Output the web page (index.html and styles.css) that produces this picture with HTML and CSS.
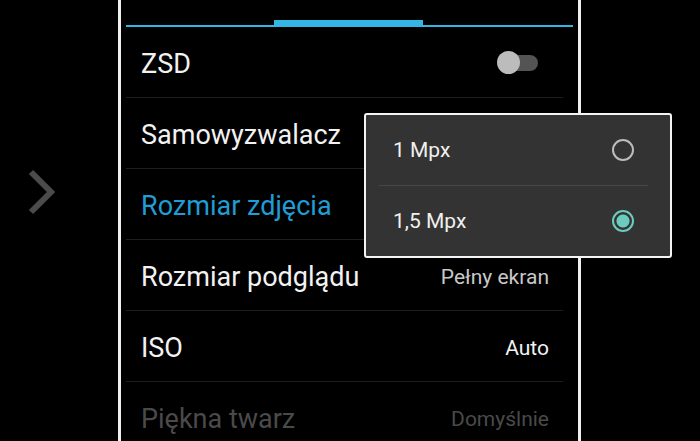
FILE: index.html
```html
<!DOCTYPE html>
<html lang="pl">
<head>
    <meta charset="UTF-8">
    <meta name="viewport" content="width=device-width, initial-scale=1.0">
    <title>Ustawienia aparatu</title>
    <link rel="stylesheet" href="styles.css">
</head>
<body>
    <div class="ekran">
        <div class="lewa">
            <svg class="strzalka" width="40" height="60" viewBox="0 0 40 60">
                <polyline points="9,8 29,28 9,48" fill="none" stroke="#4b4b4b" stroke-width="6"/>
            </svg>
        </div>
        <div class="panel">
            <div class="zakladki">
                <div class="wskaznik"></div>
            </div>
            <div class="lista">
                <div class="wiersz">
                    <span class="nazwa">ZSD</span>
                    <span class="przelacznik"><span class="tor"></span><span class="galka"></span></span>
                </div>
                <div class="wiersz">
                    <span class="nazwa">Samowyzwalacz</span>
                </div>
                <div class="wiersz">
                    <span class="nazwa aktywna">Rozmiar zdjęcia</span>
                </div>
                <div class="wiersz">
                    <span class="nazwa">Rozmiar podglądu</span>
                    <span class="wartosc szara">Pełny ekran</span>
                </div>
                <div class="wiersz">
                    <span class="nazwa">ISO</span>
                    <span class="wartosc">Auto</span>
                </div>
                <div class="wiersz wylaczony">
                    <span class="nazwa">Piękna twarz</span>
                    <span class="wartosc">Domyślnie</span>
                </div>
            </div>
        </div>
        <div class="okno">
            <div class="opcja">
                <span>1 Mpx</span>
                <span class="radio"></span>
            </div>
            <div class="opcja">
                <span>1,5 Mpx</span>
                <span class="radio zaznaczone"></span>
            </div>
        </div>
    </div>
</body>
</html>
```

FILE: styles.css
```css
body {
    margin: 0;
    background-color: #000;
    font-family: Roboto, "Noto Sans", sans-serif;
    color: #f2f2f2;
    overflow: hidden;
}
.ekran {
    position: relative;
    display: flex;
    width: 700px;
    height: 441px;
}
.lewa {
    width: 118px;
    display: flex;
    align-items: flex-start;
}
.strzalka {
    margin-top: 164px;
    margin-left: 22px;
}
.panel {
    width: 457px;
    border-left: 3px solid #f0f0f0;
    border-right: 3px solid #f0f0f0;
}
.zakladki {
    height: 27px;
    margin: 0 5px;
    border-bottom: 2px solid #33b5e5;
    box-sizing: border-box;
    display: flex;
    align-items: flex-end;
}
.wskaznik {
    width: 149px;
    height: 5px;
    margin-left: 148px;
    background-color: #33b5e5;
}
.lista {
    margin: 0 15px 0 5px;
}
.wiersz {
    height: 70px;
    box-sizing: border-box;
    height: 71px;
    padding: 3px 14px 0 15px;
    border-bottom: 1px solid #1e1e1e;
    display: flex;
    align-items: center;
    justify-content: space-between;
}
.nazwa {
    font-size: 27px;
}
.aktywna {
    color: #1f9dd6;
}
.wartosc {
    font-size: 21px;
}
.szara {
    color: #c8c8c8;
}
.wylaczony {
    color: #4a4a4a;
}
.przelacznik {
    position: relative;
    width: 41px;
    height: 23px;
    margin: -3px 11px 0 0;
}
.tor {
    position: absolute;
    left: 6px;
    right: 0;
    top: 4px;
    height: 16px;
    border-radius: 8px;
    background-color: #545454;
}
.galka {
    position: absolute;
    left: 0;
    top: 0;
    width: 23px;
    height: 23px;
    border-radius: 50%;
    background-color: #bcbcbc;
}
.okno {
    position: absolute;
    left: 364px;
    top: 113px;
    width: 304px;
    border: 2px solid #f4f4f4;
    border-radius: 3px;
    background-color: #333;
}
.opcja {
    height: 70px;
    display: flex;
    align-items: center;
    justify-content: space-between;
    padding: 0 36px 0 27px;
    font-size: 21px;
    color: #f0f0f0;
}
.opcja:first-child {
    height: 71px;
    box-sizing: border-box;
    border-bottom: 1px solid #474747;
    margin: 0 22px 0 13px;
    padding: 0 14px 0 14px;
}
.radio {
    width: 18px;
    height: 18px;
    border: 2px solid #bcbcbc;
    border-radius: 50%;
}
.zaznaczone {
    border-color: #6ccbbf;
    background: radial-gradient(circle, #6ccbbf 0, #6ccbbf 6px, #333 7px);
}
```
